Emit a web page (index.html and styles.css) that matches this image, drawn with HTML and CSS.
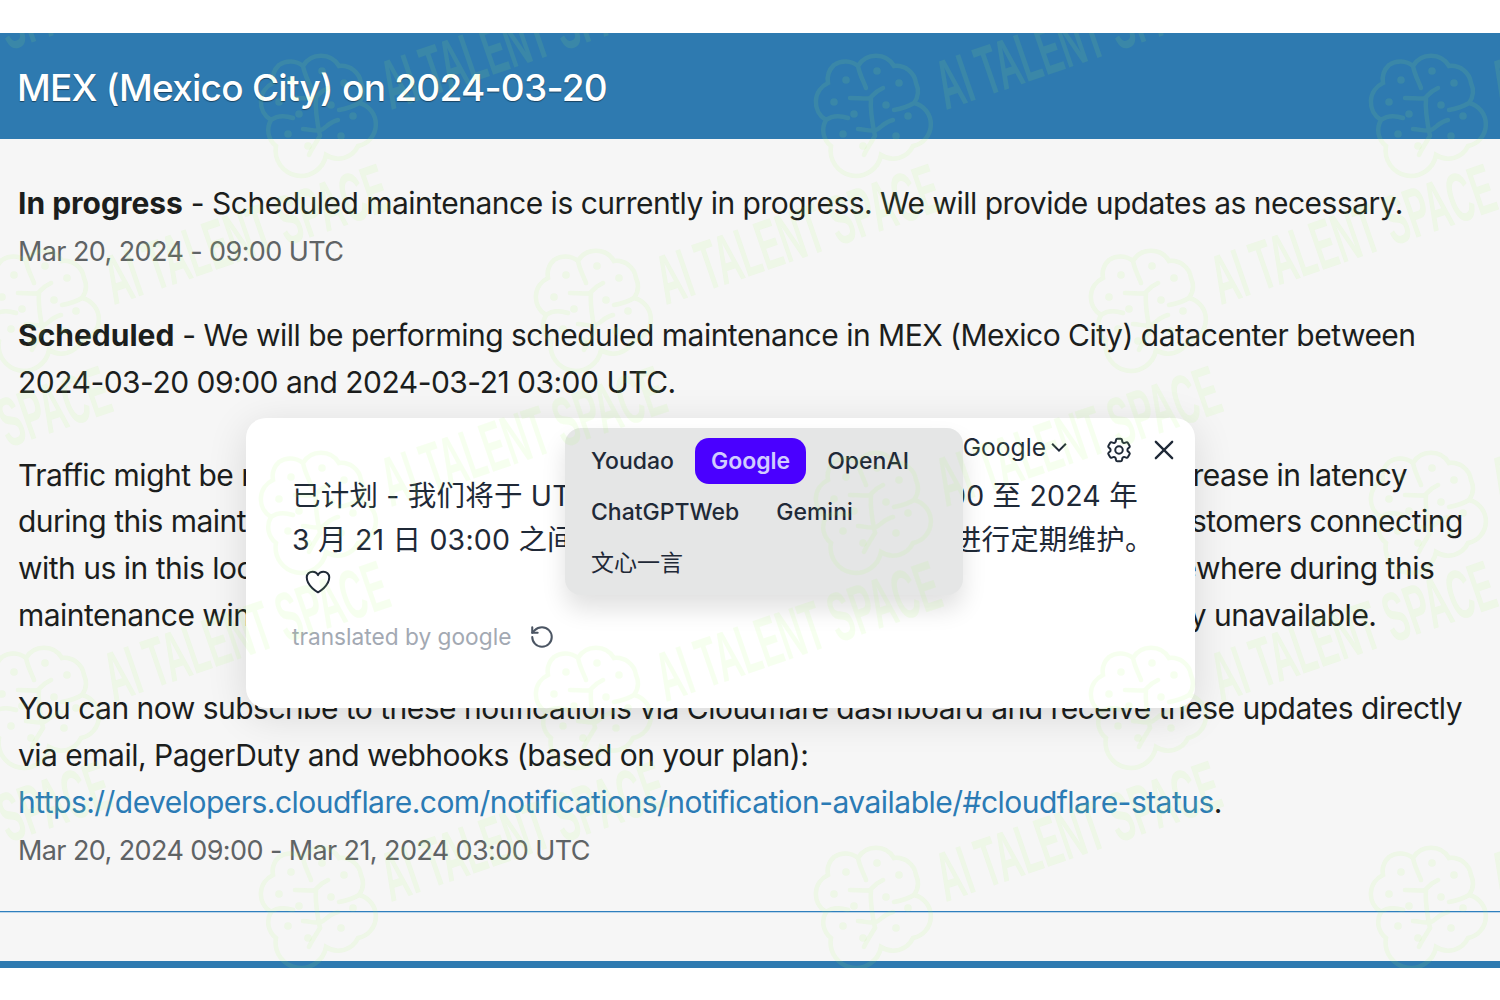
FILE: index.html
```html
<!DOCTYPE html>
<html lang="en">
<head>
<meta charset="utf-8">
<title>MEX (Mexico City) on 2024-03-20</title>
<link rel="stylesheet" href="styles.css">
</head>
<body>
<main class="panel">
  <h1 class="panel-title">MEX (Mexico City) on 2024-03-20</h1>
  <div class="panel-body">
    <section class="update update-first">
      <p class="line"><strong>In progress</strong> - Scheduled maintenance is currently in progress. We will provide updates as necessary.</p>
      <p class="stamp">Mar 20, 2024 - 09:00 UTC</p>
    </section>
    <section class="update">
      <p class="line"><strong>Scheduled</strong> - We will be performing scheduled maintenance in MEX (Mexico City) datacenter between<br>2024-03-20 09:00 and 2024-03-21 03:00 UTC.</p>
      <p class="line para">Traffic might be re-routed from this location,&nbsp; hence there is a possibility of a slight increase in latency<br>during this maintenance window for end-users in the affected region. For PNI / CNI customers connecting<br>with us in this location, please make sure you are&nbsp; expecting this traffic to fail over elsewhere during this<br>maintenance window as network interfaces in this datacentre may become temporarily unavailable.</p>
      <p class="line para">You can now subscribe to these notifications via Cloudflare dashboard and receive these updates directly<br>via email, PagerDuty and webhooks (based on your plan):<br><a class="link" href="#">https://developers.cloudflare.com/notifications/notification-available/#cloudflare-status</a>.</p>
      <p class="stamp">Mar 20, 2024 09:00 - Mar 21, 2024 03:00 UTC</p>
    </section>
  </div>
  <div class="panel-foot"></div>

  <aside class="popup">
    <div class="popup-bar">
      <button class="select">Google<svg class="chev" viewBox="0 0 24 24"><path d="M4.5 8.5 12 16l7.5-7.5"/></svg></button>
      <svg class="ico gear" viewBox="0 0 24 24"><path d="M9.594 3.94c.09-.542.56-.94 1.11-.94h2.593c.55 0 1.02.398 1.11.94l.213 1.281c.063.374.313.686.645.87.074.04.147.083.22.127.325.196.72.257 1.075.124l1.217-.456a1.125 1.125 0 011.37.49l1.296 2.247a1.125 1.125 0 01-.26 1.431l-1.003.827c-.293.24-.438.613-.431.992a6.759 6.759 0 010 .255c-.007.378.138.75.43.99l1.005.828c.424.35.534.954.26 1.43l-1.298 2.247a1.125 1.125 0 01-1.369.491l-1.217-.456c-.355-.133-.75-.072-1.076.124a6.57 6.57 0 01-.22.128c-.331.183-.581.495-.644.869l-.213 1.28c-.09.543-.56.941-1.11.941h-2.594c-.55 0-1.02-.398-1.11-.94l-.213-1.281c-.062-.374-.312-.686-.644-.87a6.52 6.52 0 01-.22-.127c-.325-.196-.72-.257-1.076-.124l-1.217.456a1.125 1.125 0 01-1.369-.49l-1.297-2.247a1.125 1.125 0 01.26-1.431l1.004-.827c.292-.24.437-.613.43-.992a6.932 6.932 0 010-.255c.007-.378-.138-.75-.43-.99l-1.004-.828a1.125 1.125 0 01-.26-1.43l1.297-2.247a1.125 1.125 0 011.37-.491l1.216.456c.356.133.751.072 1.076-.124.072-.044.146-.087.22-.128.332-.183.582-.495.644-.869l.214-1.281z"/><circle cx="12" cy="12" r="3"/></svg>
      <svg class="ico close" viewBox="0 0 24 24"><path d="M5 5l14 14M19 5 5 19"/></svg>
    </div>
    <p class="popup-text">已计划 - 我们将于 UTC <span class="popup-wide">2024 年 03 月 20 日</span> 09:00 至 2024 年<br>3 月 21 日 03:00 之间在 MEX（墨西哥城) 数据中心进行定期维护。</p>
    <svg class="ico heart" viewBox="0 0 24 24"><path d="M21 8.25c0-2.485-2.099-4.5-4.688-4.5-1.935 0-3.597 1.126-4.312 2.733-.715-1.607-2.377-2.733-4.313-2.733C5.1 3.75 3 5.765 3 8.25c0 7.22 9 12 9 12s9-4.78 9-12z"/></svg>
    <div class="popup-credit">
      <span>translated by google</span>
      <svg class="ico undo" viewBox="0 0 24 24"><path d="M3 12a9 9 0 1 0 9-9 9.75 9.75 0 0 0-6.74 2.74L3 8"/><path d="M3 3v5h5"/></svg>
    </div>
    <ul class="menu">
      <li class="menu-item">Youdao</li>
      <li class="menu-item menu-active">Google</li>
      <li class="menu-item">OpenAI</li>
      <li class="menu-item">ChatGPTWeb</li>
      <li class="menu-item">Gemini</li>
      <li class="menu-item menu-cjk">文心一言</li>
    </ul>
  </aside>

  <svg class="watermark" viewBox="0 33 1500 935" aria-hidden="true">
    <defs>
      <g id="wm">
        <path class="wm-line" d="M-12-42A21 21 0 0 1 24-42 20 20 0 0 1 46-25 20 20 0 0 1 44-5 22 22 0 0 1 43 38 22 22 0 0 1 11 47 24 24 0 0 1-39 38 20 20 0 0 1-44 12 21 21 0 0 1-42-25 20 20 0 0 1-36-43 20 20 0 0 1-12-42M13-20C4-16 2-11 0-10S-12-10-20-10M1-10C0 2 2 14 5 28M23 12C14 14 11 20 6 22S-6 21-12 21M-12-42C-10-32-6-26-4-20M44-5C36 0 30 1 24 2M-44 12C-36 6-28 8-22 10M5 28C0 36-4 42-6 47"/>
        <g class="wm-dots">
          <circle cx="7" cy="-37" r="3.8"/><circle cx="29" cy="-25" r="3.8"/><circle cx="-24" cy="-28" r="3.8"/><circle cx="-36" cy="-6" r="3.8"/><circle cx="16" cy="-3" r="3.8"/><circle cx="-16" cy="6" r="3.8"/><circle cx="38" cy="8" r="3.8"/><circle cx="-27" cy="26" r="3.8"/><circle cx="26" cy="28" r="3.8"/><circle cx="-7" cy="38" r="3.8"/>
        </g>
        <text class="wm-text" transform="translate(76 2) rotate(-19) scale(.48 1)">AI TALENT SPACE</text>
      </g>
    </defs>
    <use href="#wm" x="-240" y="108"/><use href="#wm" x="315" y="108"/><use href="#wm" x="870" y="108"/><use href="#wm" x="1425" y="108"/>
    <use href="#wm" x="38" y="303"/><use href="#wm" x="590" y="303"/><use href="#wm" x="1145" y="303"/>
    <use href="#wm" x="-240" y="505"/><use href="#wm" x="315" y="505"/><use href="#wm" x="870" y="505"/><use href="#wm" x="1425" y="505"/>
    <use href="#wm" x="38" y="700"/><use href="#wm" x="590" y="700"/><use href="#wm" x="1145" y="700"/>
    <use href="#wm" x="-240" y="900"/><use href="#wm" x="315" y="900"/><use href="#wm" x="870" y="900"/><use href="#wm" x="1425" y="900"/>
  </svg>
</main>
</body>
</html>
```
FILE: styles.css
```css
* { box-sizing: border-box; }
html, body { margin: 0; padding: 0; background: #fff; }
body { height: 1000px; overflow: hidden; padding-top: 33px; font-family: Inter, "Noto Sans CJK SC", sans-serif; color: #1c1e1d; }
.panel { position: relative; height: 935px; background: #f6f6f6; overflow: hidden; }
.panel-title { margin: 0; height: 106px; padding: 3px 17px 0; display: flex; align-items: center; background: #2e7ab0; color: #fff; font-size: 37px; font-weight: 500; letter-spacing: -.75px; text-shadow: 0 1px 1px rgba(0,0,0,.45); }
.panel-body { height: 773px; padding: 41px 18px 0; border-bottom: 1px solid #2f7fbd; box-shadow: 0 1px 0 #bcd6ea; }
.panel-foot { height: 56px; border-bottom: 7px solid #2e7ab0; }
.update { margin-bottom: 36.5px; }
.line { margin: 0; font-size: 30px; line-height: 46.7px; white-space: nowrap; letter-spacing: -.51px; }
.line strong { font-weight: 700; letter-spacing: 0; }
.para { margin-top: 46px; }
.para + .para { margin-top: 47px; }
.stamp { margin: 1px 0 0; font-size: 27px; line-height: 48px; color: #5f6365; letter-spacing: -.6px; }
.link { color: #2b7bb5; text-decoration: none; letter-spacing: -.53px; }
.popup { position: absolute; left: 246px; top: 385px; width: 949px; height: 290px; padding: 0 46px; background: #fff; border-radius: 20px; box-shadow: 0 8px 40px rgba(0,0,0,.12); color: #1f2937; }
.popup-bar { position: absolute; right: 17px; top: 14px; display: flex; align-items: center; height: 36px; }
.select { display: flex; align-items: center; gap: 2px; padding: 0 0 6px; margin-right: 34px; border: 0; background: none; font: inherit; font-size: 24.6px; color: #1f2937; }
.chev { width: 22px; height: 22px; fill: none; stroke: #1f2937; stroke-width: 2.2; }
.ico { fill: none; stroke: #1f2937; stroke-width: 1.6; stroke-linecap: round; stroke-linejoin: round; }
.gear { width: 30px; height: 30px; margin-right: 16px; }
.close { width: 28px; height: 28px; stroke-width: 2; }
.popup-text { margin: 56px 0 0; font-size: 28.5px; line-height: 43.5px; white-space: nowrap; letter-spacing: .2px; }
.popup-wide { letter-spacing: 1.8px; }
.heart { display: block; width: 30px; height: 30px; margin: 6px 0 0 11px; }
.popup-credit { display: flex; align-items: center; gap: 18px; margin-top: 26px; font-size: 22.7px; color: #a3a9b3; }
.undo { width: 26px; height: 26px; stroke: #4b5563; stroke-width: 1.9; }
.menu { position: absolute; left: 319px; top: 10px; width: 398px; height: 167px; margin: 0; padding: 10px; list-style: none; display: flex; flex-wrap: wrap; align-content: flex-start; gap: 5px; background: #e5e6e6; border-radius: 16px; box-shadow: 0 14px 24px rgba(0,0,0,.12); }
.menu-item { height: 46px; padding: 0 16px; display: flex; align-items: center; font-size: 23px; font-weight: 500; color: #1f2937; border-radius: 14px; }
.menu-active { background: #4a00ff; color: #d1ccff; font-weight: 600; }
.menu-cjk { font-weight: 400; height: 42px; }
.watermark { position: absolute; left: 0; top: 0; width: 1500px; height: 935px; pointer-events: none; }
.wm-line { fill: none; stroke: rgb(170,255,100); stroke-width: 4.5; stroke-opacity: .1; stroke-linecap: round; }
.wm-dots { fill: rgb(170,255,100); fill-opacity: .1; }
.wm-text { fill: rgb(170,255,100); fill-opacity: .1; font-family: "Liberation Sans", sans-serif; font-size: 70px; font-weight: 700; }
```
